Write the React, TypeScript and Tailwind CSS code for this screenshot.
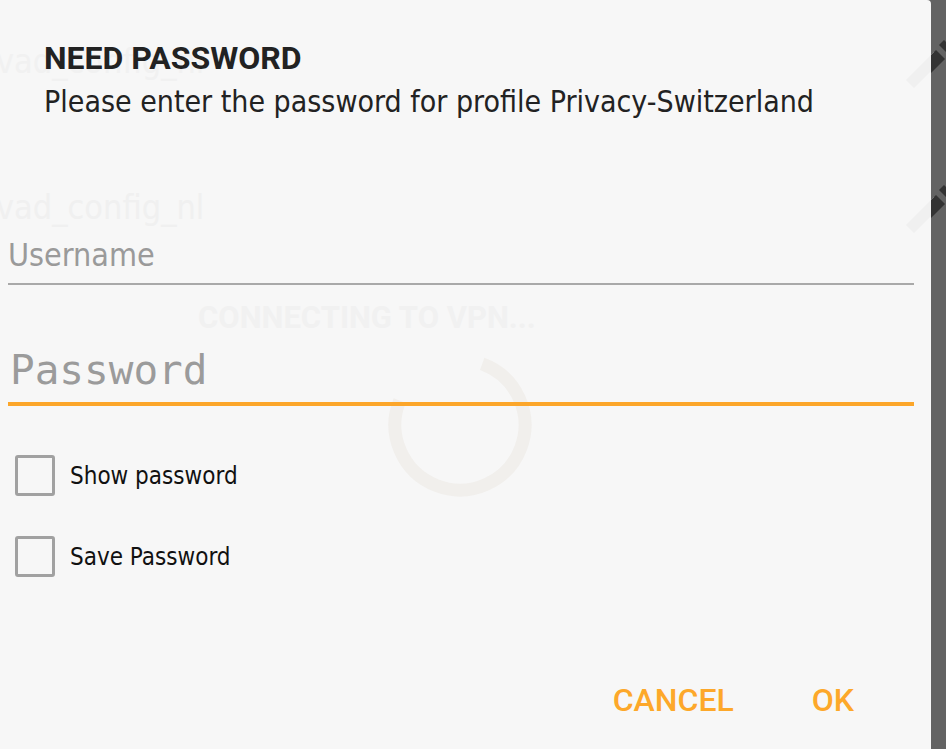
import React from "react";

const hand = "font-['DejaVu_Sans_Condensed','DejaVu_Sans',sans-serif] font-stretch-condensed";

function Pencil({ top }: { top: number }) {
  return (
    <svg
      className="absolute right-0"
      style={{ top }}
      width="46"
      height="60"
      viewBox="0 0 46 60"
    >
      <defs>
        <clipPath id={`strip-${top}`}>
          <rect x="31" y="0" width="15" height="60" />
        </clipPath>
      </defs>
      <path d="M6 52 L34 24 L42 32 L14 60 Z" fill="#f0f0f0" />
      <g clipPath={`url(#strip-${top})`}>
        <path d="M6 52 L36 22 L45 31 L15 61 Z" fill="#333333" />
        <path d="M39 17 L44 12 L52 20 L47 25 Z" fill="#333333" />
      </g>
    </svg>
  );
}

export default function App() {
  return (
    <div className="relative flex h-[749px] w-[946px] overflow-hidden bg-[#636363]">
      <div className="relative flex-1 bg-[#f7f7f7] rounded-tr-[4px] pl-[8px] pr-[17px]">
        {/* faint background content */}
        <div className={`absolute left-[-4px] top-[44px] text-[34px] leading-none text-[#f1f1f1] ${hand}`}>
          vad_config_nl
        </div>
        <div className={`absolute left-[-4px] top-[190px] text-[34px] leading-none text-[#f0f0f0] ${hand}`}>
          vad_config_nl
        </div>
        <div className="absolute left-[198px] top-[302px] font-['Roboto',sans-serif] font-bold text-[31px] leading-none text-[#f1f1f1]">
          CONNECTING TO VPN...
        </div>
        <svg className="absolute left-[382px] top-[347px]" width="156" height="156" viewBox="0 0 156 156">
          <path
            d="M100.2 16.9 A65 65 0 1 1 17.7 53.6"
            fill="none"
            stroke="#f1efec"
            strokeWidth="13"
          />
        </svg>

        <div className="relative flex flex-col">
          <div className="pl-[36px] pt-[42px] font-['Roboto',sans-serif] font-bold text-[32px] leading-none text-[#222222]">
            NEED PASSWORD
          </div>
          <div className={`pl-[36px] mt-[13px] text-[30px] leading-none text-[#222222] ${hand}`}>
            Please enter the password for profile Privacy-Switzerland
          </div>

          <div className="mt-[122px] border-b-2 border-[#a9a9a9] pb-[12px]">
            <div className={`text-[32px] leading-none text-[#9a9a9a] ${hand}`}>Username</div>
          </div>

          <div className="mt-[65px] border-b-4 border-[#fca62a] pb-[11px]">
            <div className="pl-[2px] font-['DejaVu_Sans_Mono',monospace] text-[41px] leading-none text-[#9b9b9b]">
              Password
            </div>
          </div>

          <div className="mt-[29px] flex flex-col">
            <div className="flex h-[81px] items-center">
              <div className="ml-[7px] h-[41px] w-[40px] rounded-[3px] border-[3px] border-[#a1a1a1]" />
              <span className={`ml-[15px] text-[24px] leading-none text-[#111111] ${hand}`}>Show password</span>
            </div>
            <div className="flex h-[81px] items-center">
              <div className="ml-[7px] h-[41px] w-[40px] rounded-[3px] border-[3px] border-[#a1a1a1]" />
              <span className={`ml-[15px] text-[24px] leading-none text-[#111111] ${hand}`}>Save Password</span>
            </div>
          </div>

          <div className="mt-[87px] flex justify-end gap-[78px] pr-[60px] font-['Roboto',sans-serif] font-medium text-[32px] leading-none text-[#fda82a]">
            <span>CANCEL</span>
            <span>OK</span>
          </div>
        </div>
      </div>
      <div className="w-[15px] bg-[#636363]" />
      <Pencil top={28} />
      <Pencil top={173} />
    </div>
  );
}
